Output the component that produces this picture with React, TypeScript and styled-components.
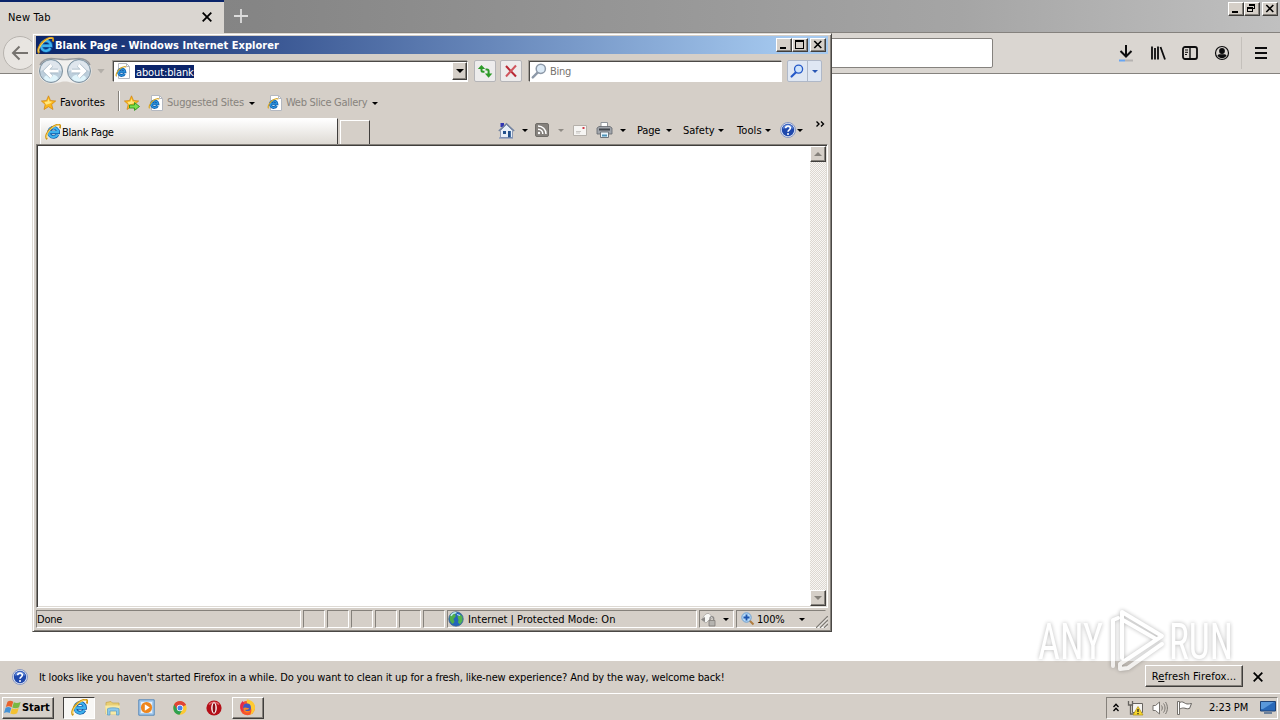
import type { ReactNode } from "react";
import styled, { createGlobalStyle, css } from "styled-components";

const App = () => {
  return (
    <>
      <GlobalStyle />
      <Desktop>
        <Firefox />
        <Taskbar />
        <ExplorerWindow />
        <Watermark />
      </Desktop>
    </>
  );
};

export default App;

/* ---------- icons ---------- */

const IeIcon = ({ size = 16 }: { size?: number }) => (
  <svg width={size} height={size} viewBox="0 0 16 16" fill="none">
    <path d="M12.600 10.600a4.600 4.600 0 1 1 .6-2.200H5" stroke="#0f5aa8" strokeWidth="3.600" />
    <path d="M12.600 10.400a4.700 4.700 0 1 1 .5-2.200H5" stroke="#3fb2ee" strokeWidth="2.200" />
    <path
      d="M2.200 15.200C-.4 13.200 2 7.600 6.400 3.900 10 .9 14-.2 15 1.300c.6.8.3 2-.3 3"
      stroke="#cf9416"
      strokeWidth="1.900"
    />
    <path d="M2 14.200C.6 12 3 7.600 6.700 4.300 9.800 1.600 13.600.3 14.600 1.700" stroke="#ffe36e" strokeWidth=".9" />
  </svg>
);

const IePageIcon = () => (
  <svg width="16" height="16" viewBox="0 0 16 16" fill="none">
    <path d="M3.500.500h8l3 3v12h-11z" fill="#fff" stroke="#b4b8c0" />
    <path d="M11.500.500v3h3" stroke="#b4b8c0" />
    <path d="M9.500 10.800a3.300 3.300 0 1 1 .4-2H4" stroke="#1260ae" strokeWidth="2.800" />
    <path d="M9.500 10.800a3.300 3.300 0 1 1 .4-2H4" stroke="#2f97e0" strokeWidth="1.200" />
    <path d="M1.600 13.400C0 11.600 3 7 6 5c2-1.400 4.600-1.800 5-.6" stroke="#d9a827" strokeWidth="1.200" />
  </svg>
);

const StarIcon = ({ add }: { add?: boolean }) => (
  <svg width="16" height="16" viewBox="0 0 16 16">
    <path
      d="M7.500.8l2 4.700 5.200.5-4 3.400 1.300 5.100-4.500-2.800L3 14.500l1.200-5.100L.4 6l5.100-.5z"
      fill="#fbb81c"
      stroke="#d0830f"
      strokeWidth=".7"
    />
    <path d="M7.500 3.500l1 3 2.800.2-2.300 1.800-4 1.200L3.500 7l3-.5z" fill="#ffe680" />
    {add && <path d="M5.500 10h5V7.600l5 3.900-5 3.900V13h-5z" fill="#7be04e" stroke="#2b9422" strokeWidth=".9" />}
  </svg>
);

const HelpIcon = () => (
  <svg width="16" height="16" viewBox="0 0 16 16">
    <circle cx="8" cy="8" r="7.500" fill="#dfe5f2" stroke="#7286bc" strokeWidth=".8" />
    <circle cx="8" cy="8" r="6.200" fill="#1f48ac" />
    <path d="M2.600 7a5.500 5.500 0 0 1 10.800 0C10 5.400 6 5.400 2.600 7z" fill="#5f86d6" />
    <path d="M5.700 6.300c0-3 4.700-3 4.700-.2C10.400 7.800 8 7.800 8 9.700" fill="none" stroke="#fff" strokeWidth="1.600" />
    <circle cx="8" cy="12" r="1" fill="#fff" />
  </svg>
);

const HistoryArrows = () => (
  <svg width="56" height="28" viewBox="0 0 56 28" fill="none">
    <path d="M14 1.500h28a12.500 12.500 0 0 1 0 25c-7 0-9-2-14-2s-7 2-14 2a12.500 12.500 0 0 1 0-25z" fill="#f1f0ee" />
    <path d="M3 8c2-4 6-6.500 11-6.500 5 0 9 1 14 1s9-1 14-1c5 0 9 2.500 11 6.500" stroke="#96989c" strokeWidth="1.500" />
    {[14, 42].map((cx) => (
      <g key={cx}>
        <circle cx={cx} cy="14" r="11.500" fill="#bccedb" stroke="#7d8f9c" />
        <path d={`M${cx - 10.5} 14a10.500 10.500 0 0 1 21 0c-6-2-15-2-21 0z`} fill="#dfe6ed" />
        <ellipse cx={cx} cy="21" rx="7" ry="3.500" fill="#dff4fb" />
      </g>
    ))}
    <path d="M21 14H9M14.500 8L8.500 14l6 6" stroke="#9db0be" strokeWidth="4.400" />
    <path d="M21.500 14H9M14.500 8L8.500 14l6 6" stroke="#fff" strokeWidth="3.200" />
    <path d="M35 14h12M41.500 8l6 6-6 6" stroke="#9db0be" strokeWidth="4.400" />
    <path d="M34.500 14h12.500M41.500 8l6 6-6 6" stroke="#fff" strokeWidth="3.200" />
  </svg>
);

const RefreshIcon = () => (
  <svg width="16" height="16" viewBox="0 0 16 16" fill="none" stroke="#2c9a28" strokeWidth="2">
    <path d="M4.500 4.500v2.800c0 1 .6 1.500 1.500 1.500h1.500" />
    <path d="M.8 6L4.500 2l3.700 4z" fill="#2c9a28" stroke="none" />
    <path d="M8.500 6.500H10c1 0 1.600.5 1.600 1.500v4" />
    <path d="M7.900 10.500l3.700 4.200 3.700-4.200z" fill="#2c9a28" stroke="none" />
  </svg>
);

const StopIcon = () => (
  <svg width="14" height="14" viewBox="0 0 14 14" stroke="#b82833" fill="none">
    <path d="M2 2l10 10.500" strokeWidth="2" />
    <path d="M12 1.500L2 12.500" strokeWidth="2" stroke="#d0565e" />
  </svg>
);

const Lens = ({ color, glass, size = 16 }: { color: string; glass: string; size?: number }) => (
  <svg width={size} height={size} viewBox="0 0 16 16">
    <path d="M6.800 9.400L1.800 14.400" stroke={color} strokeWidth="2.400" strokeLinecap="round" />
    <circle cx="9.800" cy="5.800" r="4.600" fill={glass} stroke={color} strokeWidth="1.500" />
  </svg>
);

const HomeIcon = () => (
  <svg width="17" height="17" viewBox="0 0 17 17">
    <path d="M2.500 1h3.500v4H2.500z" fill="#3035b4" />
    <path d="M2.500 8.500l6-6 6 6v7h-12z" fill="#e6eef8" stroke="#7888a8" strokeWidth=".8" />
    <path d="M.8 9L8.500 1.800 16.200 9" fill="none" stroke="#7484a0" strokeWidth="1.500" />
    <path d="M5 9h3v3H5zM10 9h2.800v6.500H10z" fill="#1f4f8c" />
    <path d="M1 16h14" stroke="#6e87b4" />
  </svg>
);

const FeedIcon = () => (
  <svg width="14" height="14" viewBox="0 0 14 14" fill="none" stroke="#fff" strokeWidth="1.500">
    <rect x=".5" y=".5" width="13" height="13" rx="1.500" fill="#85817c" stroke="#706d69" strokeWidth="1" />
    <path d="M3 3c4.500 0 8 3.500 8 8M3 6.200c2.800 0 4.800 2 4.800 4.800" />
    <circle cx="4" cy="10" r="1.200" fill="#fff" stroke="none" />
  </svg>
);

const MailIcon = () => (
  <svg width="14" height="11" viewBox="0 0 14 11">
    <path d="M.500.500h13v10H.500z" fill="#f6f5f3" stroke="#b5b0aa" />
    <path d="M9.500 2h2v2h-2z" fill="#d03c48" />
    <path d="M3 6.500h5M3 8h4" stroke="#c9c7c4" />
  </svg>
);

const PrinterIcon = () => (
  <svg width="17" height="16" viewBox="0 0 17 16">
    <path d="M5 .500h6.500v5H5z" fill="#fff" stroke="#91959a" />
    <path d="M1 6l2-1.500h11L16 6v6H1z" fill="#a2a6ac" stroke="#63676d" strokeWidth=".8" />
    <path d="M3 6.500h11v2H3z" fill="#43474d" />
    <path d="M4.500 10h8v5.500h-8z" fill="#eaf4fb" stroke="#70767c" />
    <path d="M6 12.500h5v2H6z" fill="#4f94b8" />
  </svg>
);

const GlobeIcon = () => (
  <svg width="16" height="16" viewBox="0 0 16 16">
    <circle cx="8" cy="8" r="7.300" fill="#2465bc" stroke="#4b6a88" strokeWidth=".7" />
    <path d="M2 5c1-3 4-4 6.500-4L7 3.500 8 5 5.500 8l1 3-2 2C2 11 1 8 2 5z" fill="#4eae4c" />
    <path d="M9.500 5.500l3-2 2 2.500v4l-2.500 3.500-2-2 .5-2.500z" fill="#52b44e" />
    <path d="M3 5c1-2.500 3-3.500 5.500-3.200M9 3.500l3 1" stroke="#bfe6f5" strokeWidth="1.300" fill="none" />
  </svg>
);

const PrivacyIcon = () => (
  <svg width="17" height="16" viewBox="0 0 17 16">
    <path d="M2 9c2-5 4-7 7-6.500l4 4-4 2.500-3 3z" fill="#f8f8f6" stroke="#a09e9a" strokeWidth=".7" />
    <path d="M1 8.500l4-2.500v5z" fill="#8a8886" />
    <path d="M10 9V7.500c0-2.500 3.700-2.500 3.700 0V9" fill="none" stroke="#8c8a88" strokeWidth="1.300" />
    <path d="M9 9.500h6v5.500H9z" fill="#b5b3af" stroke="#7d7a76" strokeWidth=".8" />
  </svg>
);

const ZoomIcon = () => (
  <svg width="14" height="14" viewBox="0 0 14 14">
    <path d="M8 8l4.500 4.500" stroke="#b07c3e" strokeWidth="2" />
    <circle cx="5.500" cy="5.500" r="4.700" fill="#b5d8f6" stroke="#6d9fd0" />
    <path d="M5.500 2.500v6M2.500 5.500h6" stroke="#1d55ae" strokeWidth="1.800" />
  </svg>
);

const WindowsFlag = () => (
  <svg width="18" height="17" viewBox="0 0 17 16">
    <path d="M3.300 2.500C5 1.400 7 1.500 8.700 2.600L7.200 7.700C5.500 6.700 3.600 6.600 1.700 7.500z" fill="#e8622c" />
    <path d="M9.300 3c1.800 1 3.900 1 6.400-.2L14.200 7.800c-2 1.100-4.300 1.200-6.400.2z" fill="#78b843" />
    <path d="M1.500 8.200C3.400 7.300 5 7.300 6.900 8.400L5.400 13.300C3.700 12.200 2 12.200 0 13.100z" fill="#4592d6" />
    <path d="M7.500 8.700c2 .9 4 .9 6.400-.2l-1.500 5c-2.200 1.100-4.300 1.100-6.400.200z" fill="#f3c132" />
  </svg>
);

const FolderIcon = () => (
  <svg width="18" height="16" viewBox="0 0 18 16">
    <path d="M2 2.500l5-1 1.500 1.500H15V14H2z" fill="#e9cf74" stroke="#c6a448" strokeWidth=".7" />
    <path d="M1 5.500h15l-1 9H2z" fill="#f8e9a4" />
    <path d="M3.500 15V8.800C5 7.500 13 7.500 15 8.800V15h-2.500v-4H6v4z" fill="#8cc8ea" stroke="#569bc4" strokeWidth=".7" />
  </svg>
);

const MediaIcon = () => (
  <svg width="17" height="17" viewBox="0 0 17 17">
    <path d="M.8.800h15.400v15.400H.800z" fill="#a9cdf0" stroke="#5688b8" />
    <path d="M3 3h11v11H3z" fill="#e6f1fa" />
    <circle cx="8.500" cy="8.500" r="5.600" fill="#ee861d" />
    <path d="M6.800 5.300l5 3.200-5 3.200z" fill="#fff" />
  </svg>
);

const ChromeIcon = () => (
  <svg width="14" height="14" viewBox="0 0 14 14">
    <circle cx="7" cy="7" r="6.700" fill="#fcc934" />
    <path d="M7 7L1.200 3.600A6.700 6.700 0 0 1 12.900 4z" fill="#e04436" />
    <path d="M7 7L1.200 3.600A6.700 6.700 0 0 0 6.500 13.700L9.600 8.500z" fill="#2fa14f" />
    <path d="M7 4h5.900a6.700 6.700 0 0 0-11.700-.4L4 8z" fill="#e04436" />
    <circle cx="7" cy="7" r="3.200" fill="#fff" />
    <circle cx="7" cy="7" r="2.500" fill="#4582ec" />
  </svg>
);

const OperaIcon = () => (
  <svg width="16" height="16" viewBox="0 0 16 16">
    <circle cx="8" cy="8" r="7.600" fill="#b50f18" />
    <path d="M3 4.500a6.500 6.500 0 0 1 10 0" stroke="#e2686c" fill="none" strokeWidth="1.500" />
    <ellipse cx="8" cy="8" rx="2.800" ry="5.800" fill="#fff" />
    <ellipse cx="8" cy="8" rx="1.400" ry="4.700" fill="#8c0c14" />
  </svg>
);

const FirefoxIcon = () => (
  <svg width="17" height="17" viewBox="0 0 17 17">
    <circle cx="8.500" cy="9" r="7.300" fill="#f8552c" />
    <path d="M8 .5c5 .5 8.500 4 8 9-.4 3-2.500 5.500-5 6.500 2-3 2-7-.5-9C8.500 5.500 7 3.500 8 .5z" fill="#ffcb32" />
    <path d="M1.500 5L3.500 2l2 2.500C3 7 3 11 5 13c-3-1-4.500-4.500-3.500-8z" fill="#e32a4b" />
    <circle cx="8" cy="8.500" r="3.900" fill="#3f58c4" />
    <path d="M4.400 9c1-1 3-.6 4.500 0l1.500.5c-1 1.600-3.500 1-4.500 1.500 1.500 1.500 4 1.500 5.500.5-1.500 3.500-7 2.500-7-2.500z" fill="#f98a24" />
  </svg>
);

const CloseGlyph = ({ size = 10, weight = 1.8 }: { size?: number; weight?: number }) => (
  <svg width={size} height={size} viewBox="0 0 10 10" stroke="#000" strokeWidth={weight}>
    <path d="M.7.700l8.600 8.600M9.300.700L.7 9.300" />
  </svg>
);

const CaptionGlyph = ({ kind }: { kind: "min" | "max" | "restore" | "close" }) => (
  <svg width="12" height="11" viewBox="0 0 12 11" fill="none" stroke="#000" shapeRendering="crispEdges">
    {kind === "min" && <path d="M2 9h6" strokeWidth="2" />}
    {kind === "max" && <path d="M1.500 1.500h8v8h-8zM1 2h9" />}
    {kind === "restore" && <path d="M3.500 3V1.500h5v4H7M3 2h6M1.500 4.500h5v4h-5zM1 5h6" />}
    {kind === "close" && <path d="M2.300 2l7 7M9.300 2l-7 7" strokeWidth="1.600" shapeRendering="auto" />}
  </svg>
);

const CaptionButtons = ({ restore }: { restore?: boolean }) => (
  <CaptionGroup>
    <CaptionButton>
      <CaptionGlyph kind="min" />
    </CaptionButton>
    <CaptionButton>
      <CaptionGlyph kind={restore ? "restore" : "max"} />
    </CaptionButton>
    <CaptionButton $gap>
      <CaptionGlyph kind="close" />
    </CaptionButton>
  </CaptionGroup>
);

/* ---------- firefox ---------- */

const Firefox = () => (
  <Browser>
    <TabStrip>
      <FirefoxTab>
        <Text $track={0.2}>New Tab</Text>
        <CloseGlyph />
      </FirefoxTab>
      <NewTab>
        <svg width="14" height="14" viewBox="0 0 14 14" stroke="#dcdcdc" strokeWidth="1.800">
          <path d="M7 0v14M0 7h14" />
        </svg>
      </NewTab>
      <CaptionButtons restore />
    </TabStrip>
    <Toolbar>
      <BackButton>
        <svg width="18" height="16" viewBox="0 0 18 16" fill="none" stroke="#76736f" strokeWidth="2">
          <path d="M17 8H2M8.500 1.500L2 8l6.500 6.500" />
        </svg>
      </BackButton>
      <UrlBar />
      <ToolbarIcons>
        <svg width="16" height="18" viewBox="0 0 16 18" fill="none" stroke="#0c0c0d" strokeWidth="2">
          <path d="M8 1v11M2.500 7L8 12.500 13.500 7" />
          <path d="M1 16.500h6" stroke="#69a6f2" />
          <path d="M7 16.500h8" stroke="#b5b2b0" />
        </svg>
        <svg width="16" height="16" viewBox="0 0 16 16" stroke="#0c0c0d" strokeWidth="1.800">
          <path d="M2 1.500v13M5 3v11.500M8 1.500v13M10.500 2L15 14.500" />
        </svg>
        <svg width="16" height="16" viewBox="0 0 16 16" fill="none" stroke="#0c0c0d" strokeWidth="1.800">
          <rect x="1" y="2" width="14" height="12" rx="2" />
          <path d="M8 2v12" strokeWidth="1.400" />
          <path d="M3 5h3M3 7.300h3M3 9.500h2" strokeWidth="1" />
        </svg>
        <svg width="16" height="16" viewBox="0 0 16 16" fill="#0c0c0d">
          <circle cx="8" cy="8" r="6.500" fill="none" stroke="#0c0c0d" strokeWidth="1.200" />
          <circle cx="8" cy="6" r="2.900" />
          <path d="M3.500 10.500c1-1.500 2-1.200 4.500-1.200s3.500-.3 4.500 1.200c-2 3.600-7 3.600-9 0z" />
        </svg>
      </ToolbarIcons>
      <MenuButton>
        <svg width="12" height="12" viewBox="0 0 12 12" stroke="#0c0c0d" strokeWidth="2">
          <path d="M0 1h12M0 6h12M0 11h12" />
        </svg>
      </MenuButton>
    </Toolbar>
    <BrowserPage />
    <NotificationBar>
      <HelpIcon />
      <Message $track={-0.135}>
        It looks like you haven't started Firefox in a while. Do you want to clean it up for a fresh, like-new
        experience? And by the way, welcome back!
      </Message>
      <RefreshButton>
        <Text $track={0.12}>
          R<u>e</u>fresh Firefox...
        </Text>
      </RefreshButton>
      <CloseGlyph />
    </NotificationBar>
  </Browser>
);

/* ---------- internet explorer ---------- */

const LinkItem = ({ icon, label, width, track }: { icon: ReactNode; label: string; width: number; track: number }) => (
  <FavoriteLink>
    {icon}
    <Text $color="#87837d" $width={width} $track={track}>
      {label}
    </Text>
    <Caret />
  </FavoriteLink>
);

const ExplorerWindow = () => (
  <Window>
    <TitleBar>
      <IeIcon size={17} />
      <Title>Blank Page - Windows Internet Explorer</Title>
      <CaptionButtons />
    </TitleBar>
    <NavRow>
      <HistoryArrows />
      <HistoryDrop />
      <AddressBar>
        <IePageIcon />
        <Selected>about:blank</Selected>
        <DropButton>
          <Caret $size={4} />
        </DropButton>
      </AddressBar>
      <NavButton>
        <RefreshIcon />
      </NavButton>
      <NavButton>
        <StopIcon />
      </NavButton>
      <SearchBox>
        <Lens color="#8d99a8" glass="#dceaf6" size={16} />
        <Text $color="#77736f" $track={-0.3}>
          Bing
        </Text>
      </SearchBox>
      <SearchButton>
        <Lens color="#2458c8" glass="#cfe4fb" size={14} />
        <SearchDrop>
          <Caret $color="#2a57b4" />
        </SearchDrop>
      </SearchButton>
    </NavRow>
    <FavoritesRow>
      <StarIcon />
      <FavoritesLabel $track={0.05}>Favorites</FavoritesLabel>
      <Divider />
      <StarIcon add />
      <LinkItem icon={<IePageIcon />} label="Suggested Sites" width={85} track={-0.2} />
      <LinkItem icon={<IePageIcon />} label="Web Slice Gallery" width={89} track={-0.3} />
    </FavoritesRow>
    <CommandRow>
      <ExplorerTab>
        <IeIcon size={16} />
        <Text $track={-0.3}>Blank Page</Text>
      </ExplorerTab>
      <BlankTab />
      <Commands>
        <Command $width={37} $space={7}>
          <HomeIcon />
          <Caret />
        </Command>
        <Command $width={38} $space={9}>
          <FeedIcon />
          <Caret $color="#8f8b85" />
        </Command>
        <Command $width={23} $space={0}>
          <MailIcon />
        </Command>
        <Command $width={40} $space={7}>
          <PrinterIcon />
          <Caret />
        </Command>
        <Command $width={46} $space={3}>
          <Text $width={25}>Page</Text>
          <Caret />
        </Command>
        <Command $width={54} $space={3}>
          <Text $width={33} $track={0}>
            Safety
          </Text>
          <Caret />
        </Command>
        <Command $width={44} $space={2}>
          <Text $width={27} $track={0.1}>
            Tools
          </Text>
          <Caret />
        </Command>
        <Command $width={34} $space={1}>
          <HelpIcon />
          <Caret />
        </Command>
        <Chevrons width="9" height="6" viewBox="0 0 9 6" fill="none" stroke="#000" strokeWidth="1.400">
          <path d="M.5.500L3 3 .5 5.500M5 .500L7.500 3 5 5.500" />
        </Chevrons>
      </Commands>
    </CommandRow>
    <Document>
      <ScrollBar>
        <ScrollButton>
          <Caret $size={4} $up $color="#85817b" />
        </ScrollButton>
        <ScrollButton>
          <Caret $size={4} $color="#85817b" />
        </ScrollButton>
      </ScrollBar>
    </Document>
    <StatusBar>
      <Panel $width={265}>
        <Text $track={-0.2}>Done</Text>
      </Panel>
      {[0, 1, 2, 3, 4, 5].map((n) => (
        <Panel key={n} $width={22} />
      ))}
      <Panel $width={250}>
        <GlobeIcon />
        <Zone $track={0.02}>Internet | Protected Mode: On</Zone>
      </Panel>
      <Panel $width={35}>
        <PrivacyIcon />
        <Caret $push />
      </Panel>
      <Panel $width={90} $last>
        <ZoomIcon />
        <Text $width={44}>100%</Text>
        <Caret />
        <Grip width="12" height="12" viewBox="0 0 12 12" strokeWidth="1.300">
          <path d="M0 12L12 0M4 12l8-8M8 12l4-4" stroke="#807c76" />
          <path d="M1.500 12L12 1.500M5.500 12L12 5.500M9.500 12l2.500-2.500" stroke="#fff" strokeWidth=".7" />
        </Grip>
      </Panel>
    </StatusBar>
  </Window>
);

/* ---------- taskbar ---------- */

const Taskbar = () => (
  <TaskRow>
    <StartButton>
      <WindowsFlag />
      Start
    </StartButton>
    <TaskItem $state="pressed">
      <IeIcon size={17} />
    </TaskItem>
    <TaskItem>
      <FolderIcon />
    </TaskItem>
    <TaskItem>
      <MediaIcon />
    </TaskItem>
    <TaskItem>
      <ChromeIcon />
    </TaskItem>
    <TaskItem>
      <OperaIcon />
    </TaskItem>
    <TaskItem $state="raised">
      <FirefoxIcon />
    </TaskItem>
    <Tray>
      <svg width="6" height="9" viewBox="0 0 6 9" fill="none" stroke="#000" strokeWidth="1.300">
        <path d="M.5 4L3 1.200 5.500 4M.5 8L3 5.200 5.500 8" />
      </svg>
      <svg width="17" height="16" viewBox="0 0 17 16">
        <path d="M5.500 3.500h10v9h-10z" fill="#f4f3f0" stroke="#66635f" />
        <path d="M1.500 1v4h4V1M3.500 5v9H8" fill="none" stroke="#66635f" strokeWidth="1.300" />
        <path d="M11 6.500l5 8.500H6z" fill="#f7d72a" stroke="#b29112" strokeWidth=".7" />
        <path d="M11 9v3M11 13v1.200" stroke="#222" strokeWidth="1.300" />
      </svg>
      <svg width="16" height="16" viewBox="0 0 16 16" fill="none" stroke="#77736e">
        <path d="M1 5.500h2.500L7.500 2v12l-4-3.500H1z" fill="#fff" />
        <path d="M9.500 5.500c1 1.500 1 3.500 0 5M11.500 3.500c2 2.500 2 6.500 0 9M13.500 2c2.500 3.500 2.500 8.500 0 12" />
      </svg>
      <svg width="17" height="16" viewBox="0 0 17 16" stroke="#66635f">
        <path d="M3.500 2.500c3-1.500 4 0 6 1 2 .8 3 .5 6 0l-2 5c-3 .8-4-.5-6-.5-1.500 0-2 .3-4 1z" fill="#fff" />
        <path d="M1.500 1.500h2v13h-2z" fill="#fff" strokeWidth=".9" />
      </svg>
      <Clock $track={-0.1}>2:23 PM</Clock>
      <svg width="16" height="13" viewBox="0 0 16 13">
        <path d="M.500.500h15v9.500H.500z" fill="#2a69b8" stroke="#1f4275" />
        <path d="M1 1h13L3 8H1z" fill="#5a98da" />
        <path d="M4 12h8" stroke="#4a678c" strokeWidth="1.500" />
      </svg>
    </Tray>
  </TaskRow>
);

const Watermark = () => (
  <Brand width="210" height="76" viewBox="0 0 210 76">
    <text x="8" y="59" textLength="65" lengthAdjust="spacingAndGlyphs">
      ANY
    </text>
    <g fill="none" stroke="#fff" strokeWidth="4" strokeLinejoin="round" strokeLinecap="round">
      <path d="M83 66V20l5-2" />
      <path d="M92 58V12l40 24-42 28v5l8-1 34-24M93 20l33 19" />
    </g>
    <text x="139" y="59" textLength="64" lengthAdjust="spacingAndGlyphs">
      RUN
    </text>
  </Brand>
);

/* ---------- styles ---------- */

const face = "#d5cfc8";

const GlobalStyle = createGlobalStyle`
  body {
    margin: 0;
    overflow: hidden;
    font-family: "DejaVu Sans Condensed", "DejaVu Sans", Verdana, sans-serif;
    font-stretch: condensed;
    font-size: 11px;
    line-height: 14px;
    color: #000;
  }
  * {
    box-sizing: border-box;
  }
  svg {
    flex: none;
    display: block;
  }
`;

const raised = css`
  border: 1px solid;
  border-color: #fff #403e3c #403e3c #fff;
  box-shadow: inset -1px -1px #85817b;
  background: ${face};
`;

const Desktop = styled.div`
  position: relative;
  display: flex;
  flex-direction: column;
  width: 1280px;
  height: 720px;
  background: #fff;
  overflow: hidden;
`;

const Text = styled.span<{ $track?: number; $color?: string; $width?: number }>`
  flex: none;
  width: ${({ $width }) => ($width ? `${$width}px` : "auto")};
  padding-top: 2px;
  color: ${({ $color }) => $color ?? "inherit"};
  letter-spacing: ${({ $track }) => $track ?? -0.2}px;
  white-space: nowrap;
`;

const Caret = styled.i<{ $size?: number; $color?: string; $up?: boolean; $push?: boolean }>`
  flex: none;
  width: 0;
  height: 0;
  margin-left: ${({ $push }) => ($push ? "6px" : "0")};
  border: ${({ $size }) => $size ?? 3}px solid transparent;
  ${({ $up, $color }) =>
    $up
      ? `border-top: 0; border-bottom-color: ${$color ?? "#000"};`
      : `border-bottom: 0; border-top-color: ${$color ?? "#000"};`}
`;

const CaptionGroup = styled.div`
  display: flex;
  margin-left: auto;
`;

const CaptionButton = styled.div<{ $gap?: boolean }>`
  ${raised}
  width: 16px;
  height: 14px;
  padding-left: 1px;
  margin-left: ${({ $gap }) => ($gap ? "2px" : "0")};
`;

const Browser = styled.div`
  display: flex;
  flex-direction: column;
  height: 693px;
`;

const TabStrip = styled.div`
  display: flex;
  height: 32px;
  background: linear-gradient(90deg, #818181, #858585 20%, #a5a5a5 75%, #c0c0c0);

  ${CaptionGroup} {
    margin-top: 2px;
    margin-right: 2px;
  }
`;

const FirefoxTab = styled.div`
  display: flex;
  align-items: center;
  justify-content: space-between;
  width: 224px;
  height: 33px;
  padding: 0 12px 2px 8px;
  border-top: 2px solid #0a246a;
  background: #dad6d1;
  z-index: 1;
`;

const NewTab = styled.div`
  padding: 9px 10px;
`;

const Toolbar = styled.div`
  display: flex;
  align-items: center;
  height: 42px;
  border-top: 1px solid #85827e;
  border-bottom: 1px solid #85827e;
  background: #dad6d1;
  padding-left: 3px;
`;

const BackButton = styled.div`
  display: flex;
  align-items: center;
  justify-content: center;
  width: 34px;
  height: 34px;
  border: 1px solid #b8b4af;
  border-radius: 50%;
  background: #e8e5e1;
`;

const UrlBar = styled.div`
  width: 793px;
  height: 30px;
  margin-left: 163px;
  border: 1px solid #85827e;
  border-radius: 2px;
  background: #fff;
`;

const ToolbarIcons = styled.div`
  display: flex;
  align-items: center;
  gap: 16px;
  margin-left: 125px;
`;

const MenuButton = styled.div`
  display: flex;
  align-items: center;
  height: 32px;
  margin-left: 11px;
  padding-left: 13px;
  border-left: 1px solid #c4c0bb;
`;

const BrowserPage = styled.div`
  flex: 1;
  background: #fff;
`;

const NotificationBar = styled.div`
  display: flex;
  align-items: center;
  height: 32px;
  padding: 0 17px 0 12px;
  background: ${face};
`;

const Message = styled(Text)`
  width: 1118px;
  padding: 1px 0 0 11px;
`;

const RefreshButton = styled.div`
  ${raised}
  display: flex;
  flex: none;
  justify-content: center;
  align-items: center;
  width: 98px;
  height: 22px;
  margin: -3px 10px 0 -1px;
`;

const Window = styled.div`
  position: absolute;
  left: 32px;
  top: 33px;
  width: 800px;
  height: 599px;
  padding: 2px 3px 3px;
  display: flex;
  flex-direction: column;
  border: 1px solid;
  border-color: #dedad4 #4a4845 #4a4845 #dedad4;
  box-shadow: inset 1px 1px #fff, inset -1px -1px #85817b;
  background: ${face};
`;

const TitleBar = styled.div`
  display: flex;
  align-items: center;
  height: 18px;
  padding: 0 2px 0 1px;
  background: linear-gradient(90deg, #0a246a, #a6caf0 96%);
`;

const Title = styled.span`
  margin-left: 1px;
  color: #fff;
  font-weight: bold;
  letter-spacing: 0.03px;
  white-space: nowrap;
  padding-top: 1px;
`;

const NavRow = styled.div`
  display: flex;
  align-items: center;
  height: 34px;
  padding-left: 1px;
`;

const HistoryDrop = styled.i`
  width: 8px;
  height: 5px;
  margin: 0 8px 0 4px;
  background: #b3afa9;
  clip-path: polygon(0 0, 100% 0, 50% 100%);
`;

const field = css`
  display: flex;
  align-items: center;
  height: 21px;
  border: 1px solid;
  border-color: #4c4a47 #fff #fff #4c4a47;
  box-shadow: -1px -1px #a39f99;
  background: #fff;
`;

const AddressBar = styled.div`
  ${field}
  width: 355px;
  padding-left: 1px;
`;

const Selected = styled.span`
  margin: 1px 0 0 4px;
  padding: 1px 0 0 1px;
  height: 13px;
  line-height: 13px;
  letter-spacing: -0.12px;
  background: #0a246a;
  color: #fff;
`;

const DropButton = styled.div`
  ${raised}
  display: flex;
  align-items: center;
  justify-content: center;
  width: 15px;
  height: 18px;
  margin-left: auto;
`;

const NavButton = styled.div`
  display: flex;
  align-items: center;
  justify-content: center;
  width: 22px;
  height: 22px;
  margin-left: 6px;
  border: 1px solid #b5b5b8;
  border-radius: 2px;
  background: #edecec;

  & + & {
    margin: 0 7px 0 4px;
  }
`;

const SearchBox = styled.div`
  ${field}
  width: 253px;
  gap: 3px;
  padding-left: 1px;
`;

const SearchButton = styled.div`
  display: flex;
  align-items: center;
  width: 35px;
  height: 22px;
  margin-left: 5px;
  padding-left: 2px;
  border: 1px solid #afb8c8;
  border-radius: 2px;
  background: #dfe7f3;
`;

const SearchDrop = styled.div`
  display: flex;
  align-items: center;
  height: 20px;
  margin-left: 3px;
  padding-left: 4px;
  border-left: 1px solid #afb8c8;
`;

const FavoritesRow = styled.div`
  display: flex;
  align-items: center;
  height: 30px;
  padding-left: 5px;
`;

const FavoritesLabel = styled(Text)`
  width: 61px;
  padding: 0 0 0 3px;
`;

const Divider = styled.i`
  width: 2px;
  height: 20px;
  margin: -4px 4px 0 0;
  border-left: 1px solid #85817b;
  border-right: 1px solid #fff;
`;

const FavoriteLink = styled.div`
  display: flex;
  align-items: center;
  margin-left: 8px;

  & + & {
    margin-left: 12px;
  }
  ${Text} {
    padding: 0 0 0 3px;
  }
`;

const CommandRow = styled.div`
  display: flex;
  align-items: flex-end;
  height: 26px;
  padding-left: 4px;
`;

const ExplorerTab = styled.div`
  display: flex;
  align-items: center;
  gap: 1px;
  width: 298px;
  height: 26px;
  padding-left: 4px;
  border-top: 1px solid #fff;
  border-left: 1px solid #fff;
  border-right: 1px solid #403e3c;
  background: linear-gradient(#fff, #dedad4);
`;

const BlankTab = styled.div`
  width: 30px;
  height: 24px;
  margin-left: 2px;
  border-top: 1px solid #fff;
  border-left: 1px solid #fff;
  border-right: 1px solid #403e3c;
`;

const Commands = styled.div`
  display: flex;
  align-items: center;
  height: 28px;
  margin-left: 128px;

  ${Text} {
    padding-left: 1px;
    width: auto;
    min-width: 27px;
  }
`;

const Command = styled.div<{ $width: number; $space: number }>`
  display: flex;
  align-items: center;
  gap: ${({ $space }) => $space}px;
  width: ${({ $width }) => $width}px;
`;

const Chevrons = styled.svg`
  margin: -12px 0 0 2px;
`;

const Document = styled.div`
  display: flex;
  justify-content: flex-end;
  height: 464px;
  padding: 1px;
  border: 1px solid;
  border-color: #85817b #fff #fff #85817b;
  box-shadow: inset 1px 1px #403e3c, inset -1px -1px #dedad4;
  background: #fff;
`;

const ScrollBar = styled.div`
  display: flex;
  flex-direction: column;
  justify-content: space-between;
  width: 16px;
  background: repeating-conic-gradient(#dcd7d1 0 25%, #f8f6f4 0 50%) 0 0 / 2px 2px;
`;

const ScrollButton = styled.div`
  ${raised}
  display: flex;
  align-items: center;
  justify-content: center;
  height: 16px;
`;

const StatusBar = styled.div`
  display: flex;
  gap: 2px;
  height: 20px;
  padding-top: 2px;
`;

const Panel = styled.div<{ $width: number; $last?: boolean }>`
  display: flex;
  align-items: center;
  flex: none;
  width: ${({ $width }) => $width}px;
  height: 18px;
  padding-left: ${({ $last }) => ($last ? "4px" : "0")};
  border: 1px solid;
  border-color: #85817b #fff #fff #85817b;
  border-right-color: ${({ $last }) => ($last ? face : "#fff")};

  ${Text} {
    padding-left: ${({ $last }) => ($last ? "2px" : "0")};
  }
`;

const Zone = styled(Text)`
  margin-left: 4px;
`;

const Grip = styled.svg`
  margin: 5px 0 0 11px;
`;

const TaskRow = styled.div`
  display: flex;
  align-items: center;
  height: 27px;
  padding: 1px 2px 0;
  border-top: 1px solid #fff;
  background: ${face};
`;

const StartButton = styled.div`
  ${raised}
  display: flex;
  align-items: center;
  width: 52px;
  height: 22px;
  margin-right: 9px;
  padding-left: 1px;
  font-weight: bold;
  letter-spacing: -0.1px;
`;

const TaskItem = styled.div<{ $state?: "pressed" | "raised" }>`
  display: flex;
  align-items: center;
  justify-content: center;
  width: 32px;
  height: 22px;
  margin-right: 1.8px;
  ${({ $state }) => $state === "raised" && raised}
  ${({ $state }) =>
    $state === "pressed" &&
    css`
      border: 1px solid;
      border-color: #403e3c #fff #fff #403e3c;
      background: #f8f7f5;
    `}
`;

const Tray = styled.div`
  display: flex;
  align-items: center;
  gap: 8px;
  width: 172px;
  height: 22px;
  margin-left: auto;
  padding-left: 6px;
  border: 1px solid;
  border-color: #85817b #fff #fff #85817b;
`;

const Clock = styled(Text)`
  width: 43px;
  margin-left: 8px;
  padding: 0;
`;

const Brand = styled.svg`
  position: absolute;
  left: 1030px;
  top: 600px;
  overflow: visible;
  opacity: 0.7;
  filter: drop-shadow(0 0 2px rgba(0, 0, 0, 0.4));

  text {
    fill: #fff;
    font-family: Roboto, "Liberation Sans", sans-serif;
    font-size: 50px;
    font-weight: 400;
  }
`;
